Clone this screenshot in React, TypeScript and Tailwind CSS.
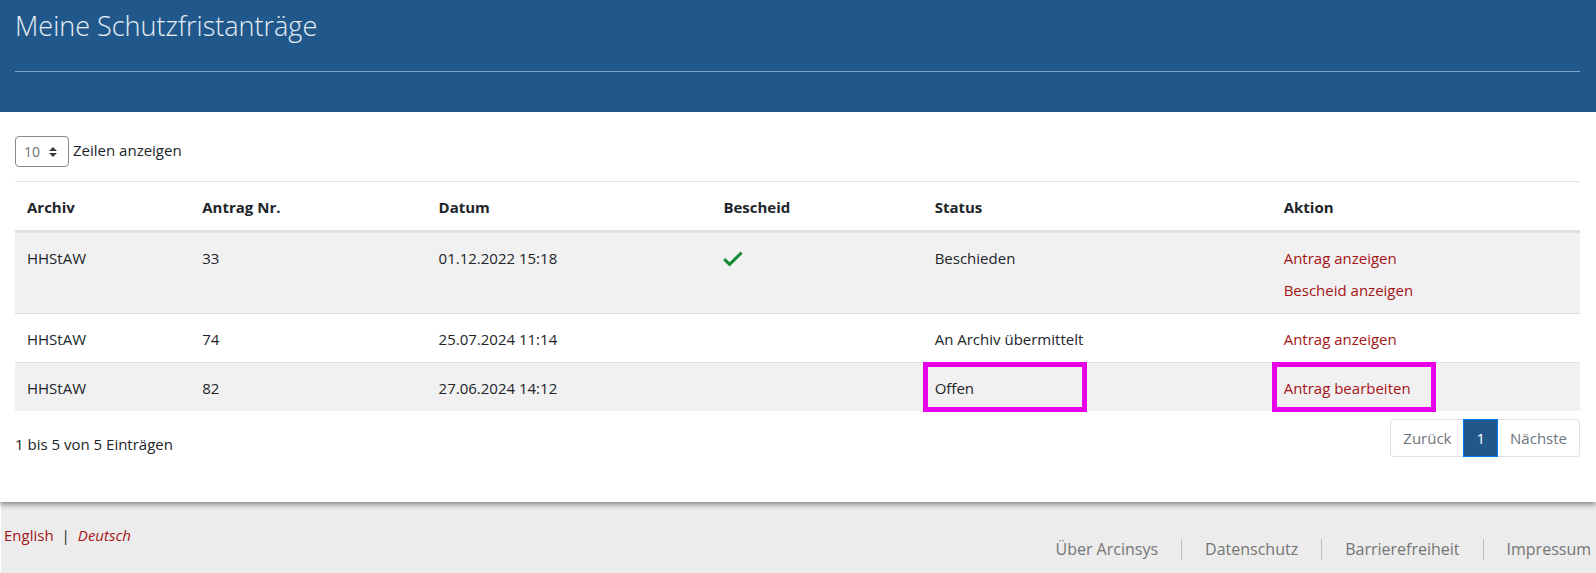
import { useState } from 'react'
import type { ReactNode } from 'react'
import clsx from 'clsx'

type Application = {
  archive: string
  no: number
  date: string
  decided: boolean
  status: string
  actions: string[]
  highlighted?: boolean
}

const applications: Application[] = [
  {
    archive: 'HHStAW',
    no: 33,
    date: '01.12.2022 15:18',
    decided: true,
    status: 'Beschieden',
    actions: ['Antrag anzeigen', 'Bescheid anzeigen'],
  },
  {
    archive: 'HHStAW',
    no: 74,
    date: '25.07.2024 11:14',
    decided: false,
    status: 'An Archiv übermittelt',
    actions: ['Antrag anzeigen'],
  },
  {
    archive: 'HHStAW',
    no: 82,
    date: '27.06.2024 14:12',
    decided: false,
    status: 'Offen',
    actions: ['Antrag bearbeiten'],
    highlighted: true,
  },
]

const columns = [
  { label: 'Archiv', width: 'w-[11.2%]' },
  { label: 'Antrag Nr.', width: 'w-[15.1%]' },
  { label: 'Datum', width: 'w-[18.2%]' },
  { label: 'Bescheid', width: 'w-[13.5%]' },
  { label: 'Status', width: 'w-[22.3%]' },
  { label: 'Aktion', width: 'w-[19.7%]' },
]

const footerLinks = ['Über Arcinsys', 'Datenschutz', 'Barrierefreiheit', 'Impressum']

function CheckIcon() {
  return (
    <svg viewBox="0 0 20 16" className="mt-[5px] h-4 w-5" role="img" aria-label="Bescheid vorhanden">
      <path d="M1.2 8.2 6.6 13.4 18.6 1.6" fill="none" stroke="#178a35" strokeWidth="3" />
    </svg>
  )
}

function Highlight() {
  return (
    <span className="pointer-events-none absolute -top-px left-0 z-10 h-[50px] w-[164px] border-5 border-[#e800e8]" />
  )
}

function Cell({ children }: { children?: ReactNode }) {
  return <td className="relative px-3 pt-[13px] pb-[11px] align-top">{children}</td>
}

function PageLengthSelect() {
  const [length, setLength] = useState('10')

  return (
    <div className="flex items-start gap-1">
      <div className="relative">
        <select
          id="page-length"
          value={length}
          onChange={(e) => setLength(e.target.value)}
          className="block h-[31px] w-[54px] appearance-none rounded-sm border border-[#8a8a8a] bg-white pl-2 text-sm text-[#6c757d]"
        >
          <option>10</option>
          <option>25</option>
          <option>50</option>
        </select>
        <svg viewBox="0 0 8 10" className="pointer-events-none absolute top-[11px] right-3 h-[10px] w-2">
          <path d="M4 0 0 4h8zM4 10 0 6h8z" fill="#343a40" />
        </svg>
      </div>
      <label htmlFor="page-length" className="leading-7">
        Zeilen anzeigen
      </label>
    </div>
  )
}

function Pagination() {
  return (
    <nav className="flex h-[38px] text-[#6c757d]">
      <button disabled className="rounded-l border border-r-0 border-[#dee2e6] px-3">
        Zurück
      </button>
      <button className="border border-[#007bff] bg-[#20588c] px-3 text-white">1</button>
      <button disabled className="rounded-r border border-l-0 border-[#dee2e6] px-3">
        Nächste
      </button>
    </nav>
  )
}

export default function App() {
  return (
    <div className="min-h-screen bg-white font-['Open_Sans',sans-serif] text-[15px] leading-6 text-[#212529]">
      <header className="relative z-10 h-28 bg-[#20588c] pt-2 pr-4 pl-[15px]">
        <h1 className="text-[27px] leading-9 font-light text-white/90">Meine Schutzfristanträge</h1>
        <hr className="mt-[27px] border-[#7fa3c8]" />
      </header>

      <main className="relative bg-white pt-6 pr-4 pb-[45px] pl-[15px] shadow-[0_2px_6px_rgba(0,0,0,0.5)]">
        <PageLengthSelect />

        <table className="mt-[14px] w-full table-fixed border-separate border-spacing-0 text-left">
          <thead>
            <tr>
              {columns.map((column) => (
                <th
                  key={column.label}
                  className={clsx('border-t border-b-3 border-[#dee2e6] px-3 pt-[13px] pb-[11px] font-bold', column.width)}
                >
                  {column.label}
                </th>
              ))}
            </tr>
          </thead>
          <tbody className="[&>tr+tr>td]:border-t [&>tr+tr>td]:border-[#dee2e6]">
            {applications.map((item) => (
              <tr key={item.no} className="odd:bg-[#f1f1f1]">
                <Cell>{item.archive}</Cell>
                <Cell>{item.no}</Cell>
                <Cell>{item.date}</Cell>
                <Cell>{item.decided && <CheckIcon />}</Cell>
                <Cell>
                  {item.status}
                  {item.highlighted && <Highlight />}
                </Cell>
                <Cell>
                  <div className="flex flex-col items-start gap-2">
                    {item.actions.map((action) => (
                      <a key={action} href="#" className="text-[#a51417]">
                        {action}
                      </a>
                    ))}
                  </div>
                  {item.highlighted && <Highlight />}
                </Cell>
              </tr>
            ))}
          </tbody>
        </table>

        <div className="mt-2 flex items-start justify-between">
          <p className="pt-[13px]">1 bis 5 von 5 Einträgen</p>
          <Pagination />
        </div>
      </main>

      <footer className="ml-px flex min-h-[71px] items-start justify-between bg-[#ececec] pr-[5px] pl-[3px]">
        <div className="flex gap-2 pt-[21px]">
          <a href="#" lang="en" className="text-[#a51417]">
            English
          </a>
          <span>|</span>
          <a href="#" className="text-[#a51417] italic">
            Deutsch
          </a>
        </div>
        <ul className="flex items-center pt-[37px] text-base leading-[21px] text-[#757575]">
          {footerLinks.map((link) => (
            <li key={link} className="border-l border-[#bdbdbd] px-[23px] first:border-l-0 last:pr-0">
              <a href="#">{link}</a>
            </li>
          ))}
        </ul>
      </footer>
    </div>
  )
}
